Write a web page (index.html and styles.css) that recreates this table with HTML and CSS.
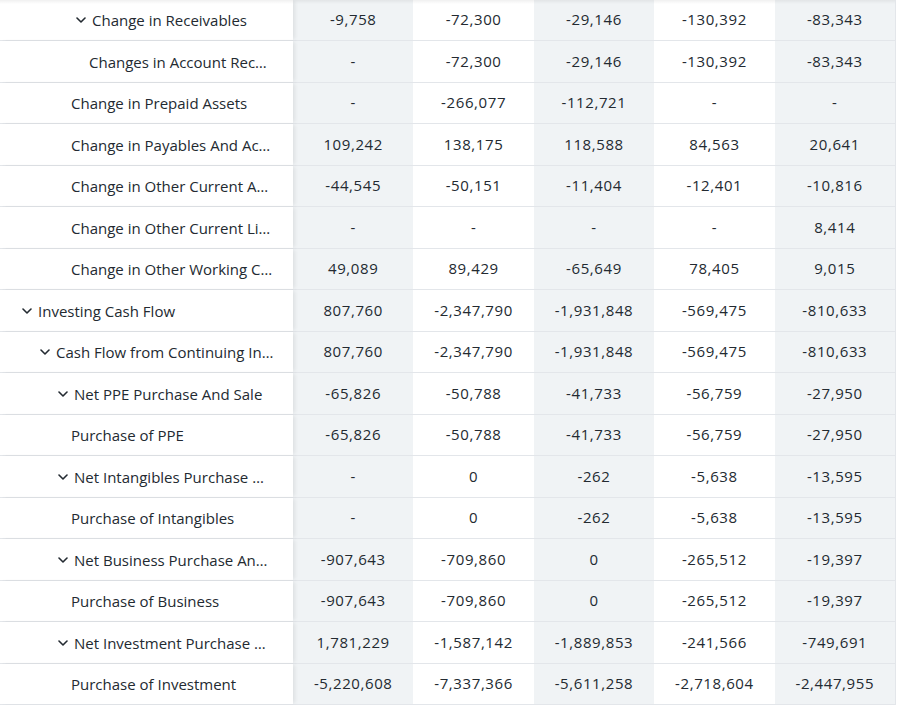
FILE: index.html
```html
<!DOCTYPE html>
<html>
<head>
<meta charset="utf-8">
<link rel="stylesheet" href="styles.css">
</head>
<body>
<div class="table">
  <div class="row"><div class="label lv3 exp"><svg class="chev" viewBox="0 0 10 6"><path d="M1 1l4 4 4-4"/></svg><span>Change in Receivables</span></div><div class="c">-9,758</div><div class="c">-72,300</div><div class="c">-29,146</div><div class="c">-130,392</div><div class="c">-83,343</div></div>
  <div class="row"><div class="label lv4"><span>Changes in Account Rec…</span></div><div class="c">-</div><div class="c">-72,300</div><div class="c">-29,146</div><div class="c">-130,392</div><div class="c">-83,343</div></div>
  <div class="row"><div class="label lv3"><span>Change in Prepaid Assets</span></div><div class="c">-</div><div class="c">-266,077</div><div class="c">-112,721</div><div class="c">-</div><div class="c">-</div></div>
  <div class="row"><div class="label lv3"><span>Change in Payables And Ac…</span></div><div class="c">109,242</div><div class="c">138,175</div><div class="c">118,588</div><div class="c">84,563</div><div class="c">20,641</div></div>
  <div class="row"><div class="label lv3"><span>Change in Other Current A…</span></div><div class="c">-44,545</div><div class="c">-50,151</div><div class="c">-11,404</div><div class="c">-12,401</div><div class="c">-10,816</div></div>
  <div class="row"><div class="label lv3"><span>Change in Other Current Li…</span></div><div class="c">-</div><div class="c">-</div><div class="c">-</div><div class="c">-</div><div class="c">8,414</div></div>
  <div class="row"><div class="label lv3"><span>Change in Other Working C…</span></div><div class="c">49,089</div><div class="c">89,429</div><div class="c">-65,649</div><div class="c">78,405</div><div class="c">9,015</div></div>
  <div class="row"><div class="label lv0 exp"><svg class="chev" viewBox="0 0 10 6"><path d="M1 1l4 4 4-4"/></svg><span>Investing Cash Flow</span></div><div class="c">807,760</div><div class="c">-2,347,790</div><div class="c">-1,931,848</div><div class="c">-569,475</div><div class="c">-810,633</div></div>
  <div class="row"><div class="label lv1 exp"><svg class="chev" viewBox="0 0 10 6"><path d="M1 1l4 4 4-4"/></svg><span>Cash Flow from Continuing In…</span></div><div class="c">807,760</div><div class="c">-2,347,790</div><div class="c">-1,931,848</div><div class="c">-569,475</div><div class="c">-810,633</div></div>
  <div class="row"><div class="label lv2 exp"><svg class="chev" viewBox="0 0 10 6"><path d="M1 1l4 4 4-4"/></svg><span>Net PPE Purchase And Sale</span></div><div class="c">-65,826</div><div class="c">-50,788</div><div class="c">-41,733</div><div class="c">-56,759</div><div class="c">-27,950</div></div>
  <div class="row"><div class="label lv3"><span>Purchase of PPE</span></div><div class="c">-65,826</div><div class="c">-50,788</div><div class="c">-41,733</div><div class="c">-56,759</div><div class="c">-27,950</div></div>
  <div class="row"><div class="label lv2 exp"><svg class="chev" viewBox="0 0 10 6"><path d="M1 1l4 4 4-4"/></svg><span>Net Intangibles Purchase …</span></div><div class="c">-</div><div class="c">0</div><div class="c">-262</div><div class="c">-5,638</div><div class="c">-13,595</div></div>
  <div class="row"><div class="label lv3"><span>Purchase of Intangibles</span></div><div class="c">-</div><div class="c">0</div><div class="c">-262</div><div class="c">-5,638</div><div class="c">-13,595</div></div>
  <div class="row"><div class="label lv2 exp"><svg class="chev" viewBox="0 0 10 6"><path d="M1 1l4 4 4-4"/></svg><span>Net Business Purchase An…</span></div><div class="c">-907,643</div><div class="c">-709,860</div><div class="c">0</div><div class="c">-265,512</div><div class="c">-19,397</div></div>
  <div class="row"><div class="label lv3"><span>Purchase of Business</span></div><div class="c">-907,643</div><div class="c">-709,860</div><div class="c">0</div><div class="c">-265,512</div><div class="c">-19,397</div></div>
  <div class="row"><div class="label lv2 exp"><svg class="chev" viewBox="0 0 10 6"><path d="M1 1l4 4 4-4"/></svg><span>Net Investment Purchase …</span></div><div class="c">1,781,229</div><div class="c">-1,587,142</div><div class="c">-1,889,853</div><div class="c">-241,566</div><div class="c">-749,691</div></div>
  <div class="row"><div class="label lv3"><span>Purchase of Investment</span></div><div class="c">-5,220,608</div><div class="c">-7,337,366</div><div class="c">-5,611,258</div><div class="c">-2,718,604</div><div class="c">-2,447,955</div></div>
</div>
</body>
</html>
```

FILE: styles.css
```css
html, body {
  margin: 0;
  padding: 0;
  background: #fff;
}
body {
  font-family: "Open Sans", "Noto Sans", sans-serif;
  color: #232a31;
  overflow: hidden;
}
.table {
  width: 895px;
  margin-top: -0.5px;
  border-right: 1px solid #e3e6ea;
  position: relative;
}
.table::before {
  content: "";
  position: absolute;
  left: 0;
  right: 0;
  top: 0;
  height: 4px;
  background: linear-gradient(rgba(0,0,0,0.06), rgba(0,0,0,0));
  z-index: 3;
}
.row {
  display: grid;
  grid-template-columns: 293px repeat(5, 1fr);
  height: 41.5px;
  box-sizing: border-box;
  border-bottom: 1px solid #e3e6ea;
}
.label {
  display: flex;
  align-items: center;
  background: #fff;
  font-size: 15px;
  white-space: nowrap;
  position: relative;
  z-index: 1;
  padding-top: 1px;
  box-shadow: 3px 0 4px -1px rgba(0,0,0,0.08);
}
.chev {
  width: 10px;
  height: 6px;
  margin-right: 6px;
  fill: none;
  stroke: #232a31;
  stroke-width: 1.6;
  stroke-linecap: round;
  stroke-linejoin: round;
  flex: none;
}
.lv0.exp { padding-left: 22px; }
.lv1.exp { padding-left: 40px; }
.lv2.exp { padding-left: 58px; }
.lv3.exp { padding-left: 76px; }
.lv3 { padding-left: 71px; }
.lv4 { padding-left: 89px; }
.c {
  display: flex;
  align-items: center;
  justify-content: center;
  font-size: 15px;
  letter-spacing: 0.6px;
  padding-bottom: 1px;
}
.c:nth-child(2), .c:nth-child(4), .c:nth-child(6) {
  background: #f0f3f5;
}
```
